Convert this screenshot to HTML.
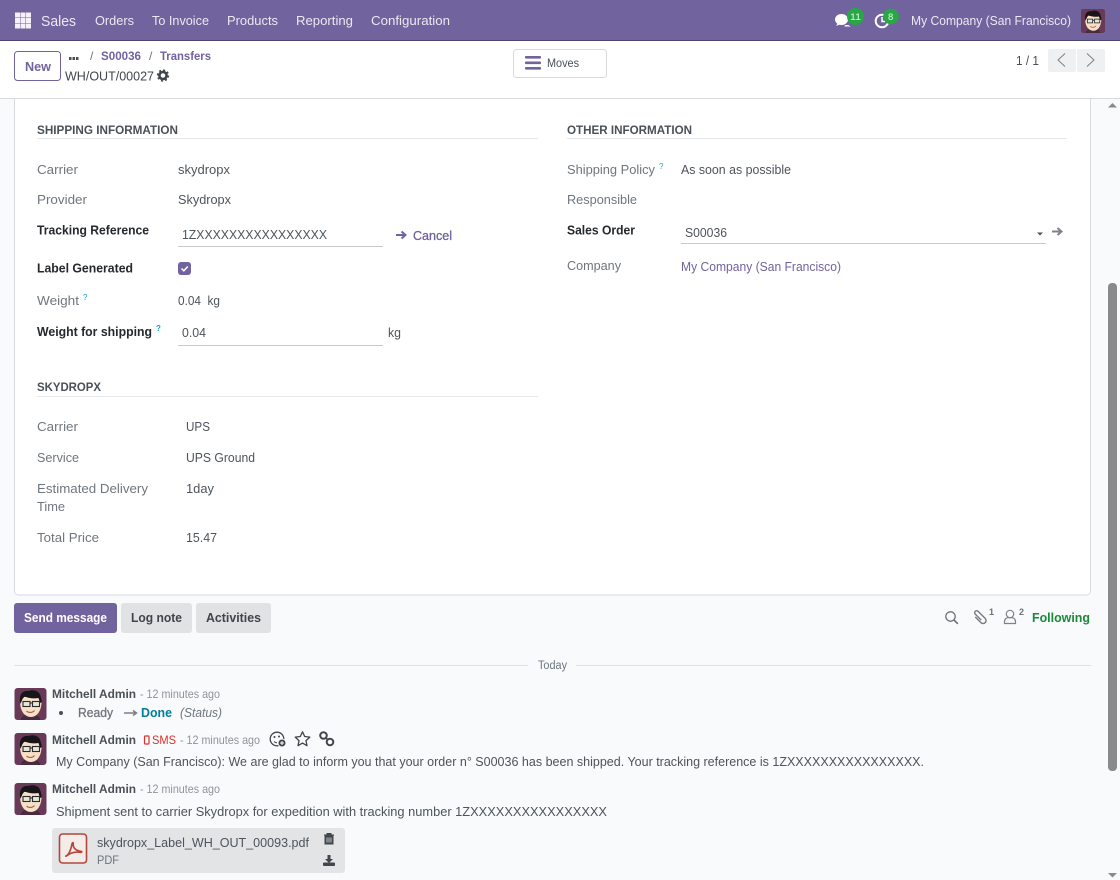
<!DOCTYPE html>
<html lang="en"><head><meta charset="utf-8"><title>WH/OUT/00027</title>
<style>
html,body{margin:0;padding:0;width:1120px;height:880px;overflow:hidden;background:#f9fafb}
svg{display:block}
text{font-family:"Liberation Sans",sans-serif;font-size:13px;fill:#4d545b}
.b{font-weight:700}
.l{fill:#6f767d}
.d{fill:#25292d;font-weight:700}
.h{font-weight:700;font-size:12px;fill:#495057}
.n{fill:#ebe8f2}
.p{fill:#71639e}
.g{fill:#8f949a;font-size:12px}
.q{fill:#17a2b8;font-size:8px}
</style></head><body>
<svg width="1120" height="880" viewBox="0 0 1120 880" xmlns="http://www.w3.org/2000/svg">
<defs>
<symbol id="av" viewBox="0 0 32 32">
<rect width="32" height="32" rx="3" fill="#693a58"/>
<path d="M6 32c1-4 4-6 10-6s9 2 10 6z" fill="#4a2a3e"/>
<path d="M5.500 13c0 10 4.500 16 11 16s10.500-7 10.500-15l-2-5H8z" fill="#f8e0c6"/>
<path d="M6 16C4 8 7 2 14 3c5-2 11 0 12 5l1.500 6-2 1-1.500-5c-5 1-10 0-14-1.500L8 11z" fill="#17151a"/>
<rect x="8.500" y="13.500" width="7" height="5" fill="#e3e5df" stroke="#2a2a2a" stroke-width="1.100"/>
<rect x="18" y="13.500" width="7" height="5" fill="#e3e5df" stroke="#2a2a2a" stroke-width="1.100"/>
<path d="M15.500 15h2.500" stroke="#2a2a2a" stroke-width="1.100"/>
<path d="M12 23c2 2 6 2 8-.5" stroke="#a0604a" stroke-width="1.100" fill="none"/>
</symbol>
<symbol id="arrow" viewBox="0 0 12 10"><path d="M1 5h9M6.500 1.500 10.500 5 6.500 8.500" fill="none" stroke="currentColor" stroke-width="2"/></symbol>
</defs>

<!-- Navbar -->
<rect width="1120" height="40" fill="#71639e"/>
<rect y="40" width="1120" height="1" fill="#4e4570"/>
<g fill="#f4f2f8">
<rect x="15" y="12.500" width="5" height="5"/><rect x="20.500" y="12.500" width="5" height="5"/><rect x="26" y="12.500" width="5" height="5"/>
<rect x="15" y="18" width="5" height="5"/><rect x="20.500" y="18" width="5" height="5"/><rect x="26" y="18" width="5" height="5"/>
<rect x="15" y="23.500" width="5" height="5"/><rect x="20.500" y="23.500" width="5" height="5"/><rect x="26" y="23.500" width="5" height="5"/>
</g>
<text x="41" y="26" class="n" style="font-size:15px" textLength="35" lengthAdjust="spacingAndGlyphs">Sales</text>
<text x="95" y="25" class="n" textLength="39" lengthAdjust="spacingAndGlyphs">Orders</text>
<text x="152" y="25" class="n" textLength="57" lengthAdjust="spacingAndGlyphs">To Invoice</text>
<text x="227" y="25" class="n" textLength="51" lengthAdjust="spacingAndGlyphs">Products</text>
<text x="296" y="25" class="n" textLength="57" lengthAdjust="spacingAndGlyphs">Reporting</text>
<text x="371" y="25" class="n" textLength="79" lengthAdjust="spacingAndGlyphs">Configuration</text>

<ellipse cx="841.500" cy="19.500" rx="6.500" ry="5.500" fill="#fff"/>
<path d="M838 23l-2 3 5-2zM845 25h3.500l2 2-2-.5h-4z" fill="#fff"/>
<circle cx="855.500" cy="16.500" r="8.500" fill="#28a745"/>
<text x="850" y="20" style="font-size:9.500px;fill:#e9f7ec;font-weight:400" textLength="11" lengthAdjust="spacingAndGlyphs">11</text>
<circle cx="882" cy="21" r="6.300" fill="none" stroke="#fff" stroke-width="2"/>
<path d="M882 17v4.500h3" fill="none" stroke="#fff" stroke-width="1.500"/>
<circle cx="891" cy="16.500" r="7.800" fill="#28a745"/>
<text x="888" y="20" style="font-size:9.500px;fill:#e9f7ec">8</text>
<text x="911" y="25" class="n" textLength="160" lengthAdjust="spacingAndGlyphs">My Company (San Francisco)</text>
<use href="#av" x="1081" y="9" width="24" height="24"/>

<!-- Control panel -->
<rect y="41" width="1120" height="57" fill="#fff"/>
<rect y="98" width="1120" height="1" fill="#d8dadd"/>
<rect x="14.500" y="51.500" width="46" height="29" rx="3" fill="#fff" stroke="#71639e"/>
<text x="25" y="71" class="p b" textLength="26" lengthAdjust="spacingAndGlyphs">New</text>
<g fill="#495057"><rect x="69" y="57" width="2.500" height="3"/><rect x="72.500" y="57" width="2.500" height="3"/><rect x="76" y="57" width="2.500" height="3"/></g>
<text x="90" y="60" style="font-size:12px;fill:#6c757d">/</text>
<text x="101" y="60" class="p b" style="font-size:12px" textLength="40" lengthAdjust="spacingAndGlyphs">S00036</text>
<text x="149" y="60" style="font-size:12px;fill:#6c757d">/</text>
<text x="160" y="60" class="p b" style="font-size:12px" textLength="51" lengthAdjust="spacingAndGlyphs">Transfers</text>
<text x="65" y="80.500" style="fill:#40464c" textLength="89" lengthAdjust="spacingAndGlyphs">WH/OUT/00027</text>
<circle cx="163" cy="75.500" r="3.600" fill="none" stroke="#40464c" stroke-width="2.600"/>
<circle cx="163" cy="75.500" r="5.400" fill="none" stroke="#40464c" stroke-width="1.500" stroke-dasharray="2 2.240"/>

<rect x="513.500" y="49.500" width="93" height="28" rx="3" fill="#fff" stroke="#d8dadd"/>
<g fill="#71639e"><rect x="525" y="56" width="16" height="2.600" rx="1"/><rect x="525" y="61.500" width="16" height="2.600" rx="1"/><rect x="525" y="67" width="16" height="2.600" rx="1"/></g>
<text x="547" y="67" style="font-size:11.500px;fill:#495057" textLength="32" lengthAdjust="spacingAndGlyphs">Moves</text>

<text x="1016" y="65" style="fill:#495057" textLength="23" lengthAdjust="spacingAndGlyphs">1 / 1</text>
<rect x="1048" y="49" width="28" height="23" rx="2" fill="#eff0f2"/>
<rect x="1077" y="49" width="28" height="23" rx="2" fill="#eff0f2"/>
<path d="M1065 53.500l-7 6.500 7 6.500M1087 53.500l7 6.500-7 6.500" fill="none" stroke="#7b8187" stroke-width="1"/>

<!-- Sheet -->
<path d="M14.500 99v492a4 4 0 0 0 4 4h1068a4 4 0 0 0 4-4V99" fill="#fff" stroke="#d8dadd"/>

<text x="37" y="134" class="h" textLength="141" lengthAdjust="spacingAndGlyphs">SHIPPING INFORMATION</text>
<rect x="37" y="138" width="501" height="1" fill="#e5e7ea"/>
<text x="567" y="134" class="h" textLength="125" lengthAdjust="spacingAndGlyphs">OTHER INFORMATION</text>
<rect x="567" y="138" width="500" height="1" fill="#e5e7ea"/>

<text x="37" y="174" class="l" textLength="41" lengthAdjust="spacingAndGlyphs">Carrier</text>
<text x="178" y="174" textLength="52" lengthAdjust="spacingAndGlyphs">skydropx</text>
<text x="37" y="204" class="l" textLength="50" lengthAdjust="spacingAndGlyphs">Provider</text>
<text x="178" y="204" textLength="53" lengthAdjust="spacingAndGlyphs">Skydropx</text>
<text x="37" y="234.500" class="d" textLength="112" lengthAdjust="spacingAndGlyphs">Tracking Reference</text>
<text x="182" y="239" textLength="145" lengthAdjust="spacingAndGlyphs">1ZXXXXXXXXXXXXXXXX</text>
<rect x="178" y="246" width="205" height="1" fill="#c6c9cd"/>
<use href="#arrow" x="395" y="230" width="12" height="10" color="#71639e"/>
<text x="413" y="240" class="p" style="stroke:#71639e;stroke-width:.3" textLength="39" lengthAdjust="spacingAndGlyphs">Cancel</text>
<text x="37" y="272.500" class="d" textLength="96" lengthAdjust="spacingAndGlyphs">Label Generated</text>
<rect x="178" y="262" width="13" height="13" rx="3" fill="#71639e"/>
<path d="M181.500 268.500l2.300 2.300 4-4.300" fill="none" stroke="#fff" stroke-width="1.500"/>
<text x="37" y="305" class="l" textLength="42" lengthAdjust="spacingAndGlyphs">Weight</text>
<text x="83" y="300" class="q">?</text>
<text x="178" y="305" textLength="42" lengthAdjust="spacingAndGlyphs">0.04&#160; kg</text>
<text x="37" y="336" class="d" textLength="115" lengthAdjust="spacingAndGlyphs">Weight for shipping</text>
<text x="156" y="331" class="q b">?</text>
<text x="182" y="337" textLength="24" lengthAdjust="spacingAndGlyphs">0.04</text>
<rect x="178" y="345" width="205" height="1" fill="#c6c9cd"/>
<text x="388" y="337" textLength="13" lengthAdjust="spacingAndGlyphs">kg</text>

<text x="37" y="391" class="h" textLength="64" lengthAdjust="spacingAndGlyphs">SKYDROPX</text>
<rect x="37" y="396" width="501" height="1" fill="#e5e7ea"/>
<text x="37" y="431" class="l" textLength="41" lengthAdjust="spacingAndGlyphs">Carrier</text>
<text x="186" y="431" textLength="24" lengthAdjust="spacingAndGlyphs">UPS</text>
<text x="37" y="462" class="l" textLength="42" lengthAdjust="spacingAndGlyphs">Service</text>
<text x="186" y="462" textLength="69" lengthAdjust="spacingAndGlyphs">UPS Ground</text>
<text x="37" y="493" class="l" textLength="111" lengthAdjust="spacingAndGlyphs">Estimated Delivery</text>
<text x="37" y="511" class="l" textLength="28" lengthAdjust="spacingAndGlyphs">Time</text>
<text x="186" y="493" textLength="28" lengthAdjust="spacingAndGlyphs">1day</text>
<text x="37" y="542" class="l" textLength="62" lengthAdjust="spacingAndGlyphs">Total Price</text>
<text x="186" y="542" textLength="31" lengthAdjust="spacingAndGlyphs">15.47</text>

<text x="567" y="174" class="l" textLength="88" lengthAdjust="spacingAndGlyphs">Shipping Policy</text>
<text x="659" y="169" class="q">?</text>
<text x="681" y="174" textLength="110" lengthAdjust="spacingAndGlyphs">As soon as possible</text>
<text x="567" y="204" class="l" textLength="70" lengthAdjust="spacingAndGlyphs">Responsible</text>
<text x="567" y="234.500" class="d" textLength="68" lengthAdjust="spacingAndGlyphs">Sales Order</text>
<text x="685" y="237" textLength="42" lengthAdjust="spacingAndGlyphs">S00036</text>
<rect x="681" y="243" width="365" height="1" fill="#c6c9cd"/>
<path d="M1037 232.500h6l-3 3z" fill="#495057"/>
<use href="#arrow" x="1051" y="226.500" width="12" height="10" color="#7c8287"/>
<text x="567" y="270" class="l" textLength="54" lengthAdjust="spacingAndGlyphs">Company</text>
<text x="681" y="271" class="p" textLength="160" lengthAdjust="spacingAndGlyphs">My Company (San Francisco)</text>

<!-- Chatter buttons -->
<rect x="14" y="603" width="103" height="30" rx="3" fill="#71639e"/>
<text x="24" y="622" class="b" style="fill:#fff" textLength="83" lengthAdjust="spacingAndGlyphs">Send message</text>
<rect x="121" y="603" width="71" height="30" rx="3" fill="#e0e2e4"/>
<text x="131" y="622" class="b" style="fill:#3f454b" textLength="51" lengthAdjust="spacingAndGlyphs">Log note</text>
<rect x="196" y="603" width="75" height="30" rx="3" fill="#e0e2e4"/>
<text x="206" y="622" class="b" style="fill:#3f454b" textLength="55" lengthAdjust="spacingAndGlyphs">Activities</text>

<circle cx="950.500" cy="616.500" r="4.700" fill="none" stroke="#6c7278" stroke-width="1.300"/>
<path d="M954 620l3.800 3.800" stroke="#6c7278" stroke-width="1.600"/>
<path d="M-3 -3V5a3 3 0 0 0 6 0V-5a2 2 0 0 0-4 0V3.500" fill="none" stroke="#757b81" stroke-width="1.400" transform="translate(979.500 617) rotate(-45)"/>
<text x="989" y="615" style="font-size:9px;fill:#6c7278;font-weight:700">1</text>
<circle cx="1010" cy="614" r="3.700" fill="none" stroke="#7c8288" stroke-width="1.200"/>
<path d="M1004.500 623.500v-1.500c0-3 2-4 3-4.300h5c1 .3 3 1.300 3 4.300v1.500z" fill="none" stroke="#7c8288" stroke-width="1.200"/>
<text x="1019" y="615" style="font-size:9px;fill:#6c7278;font-weight:700">2</text>
<text x="1032" y="622" class="b" style="fill:#1a8a3a" textLength="58" lengthAdjust="spacingAndGlyphs">Following</text>

<!-- Separator -->
<rect x="14" y="665" width="514" height="1" fill="#e0e2e5"/>
<rect x="576" y="665" width="515" height="1" fill="#e0e2e5"/>
<text x="538" y="669" style="font-size:11.500px;fill:#6c757d" textLength="29" lengthAdjust="spacingAndGlyphs">Today</text>

<!-- Message 1 -->
<use href="#av" x="14" y="688" width="33" height="32"/>
<text x="52" y="698" class="b" style="font-size:12px;fill:#495057" textLength="84" lengthAdjust="spacingAndGlyphs">Mitchell Admin</text>
<text x="140" y="698" class="g" textLength="80" lengthAdjust="spacingAndGlyphs">- 12 minutes ago</text>
<circle cx="61" cy="713" r="2" fill="#495057"/>
<text x="78" y="717" style="fill:#6f757c;stroke:#6f757c;stroke-width:.3" textLength="35" lengthAdjust="spacingAndGlyphs">Ready</text>
<path d="M124 713h12M133 710.500l3.500 2.500-3.500 2.500" fill="none" stroke="#7a8086" stroke-width="1.500"/>
<text x="141" y="717" class="b" style="fill:#017e9c" textLength="31" lengthAdjust="spacingAndGlyphs">Done</text>
<text x="180" y="717" style="font-style:italic;fill:#6c757d" textLength="42" lengthAdjust="spacingAndGlyphs">(Status)</text>

<!-- Message 2 -->
<use href="#av" x="14" y="733" width="33" height="32"/>
<text x="52" y="744" class="b" style="font-size:12px;fill:#495057" textLength="84" lengthAdjust="spacingAndGlyphs">Mitchell Admin</text>
<rect x="144.500" y="736" width="4.500" height="8" rx=".6" fill="none" stroke="#d9332f" stroke-width="1.200"/>
<text x="152" y="744" style="font-size:12px;fill:#d9332f" textLength="24" lengthAdjust="spacingAndGlyphs">SMS</text>
<text x="180" y="744" class="g" textLength="80" lengthAdjust="spacingAndGlyphs">- 12 minutes ago</text>
<circle cx="277" cy="739" r="6.800" fill="none" stroke="#40464c" stroke-width="1.300"/>
<circle cx="274.500" cy="737" r="1" fill="#40464c"/><circle cx="279" cy="736.500" r="1" fill="#40464c"/><path d="M274 741.500c1 1 2 1.300 3 1.300" stroke="#40464c" fill="none"/>
<circle cx="282" cy="743" r="4" fill="#40464c" stroke="#f9fafb"/>
<path d="M280 743h4M282 741v4" stroke="#fff"/>
<path d="M302.500 731.800l2.200 4.700 5.100.6-3.800 3.500 1 5.100-4.500-2.600-4.500 2.600 1-5.100-3.800-3.500 5.100-.6z" fill="none" stroke="#40464c" stroke-width="1.300" stroke-linejoin="round"/>
<circle cx="323.500" cy="735.500" r="3.300" fill="none" stroke="#40464c" stroke-width="2"/>
<circle cx="330" cy="742" r="3.300" fill="none" stroke="#40464c" stroke-width="2"/>
<path d="M325.500 737.500l2.500 2.500" stroke="#40464c" stroke-width="1.600"/>
<text x="56" y="766" textLength="868" lengthAdjust="spacingAndGlyphs">My Company (San Francisco): We are glad to inform you that your order n° S00036 has been shipped. Your tracking reference is 1ZXXXXXXXXXXXXXXXX.</text>

<!-- Message 3 -->
<use href="#av" x="14" y="783" width="33" height="32"/>
<text x="52" y="793" class="b" style="font-size:12px;fill:#495057" textLength="84" lengthAdjust="spacingAndGlyphs">Mitchell Admin</text>
<text x="140" y="793" class="g" textLength="80" lengthAdjust="spacingAndGlyphs">- 12 minutes ago</text>
<text x="56" y="816" textLength="551" lengthAdjust="spacingAndGlyphs">Shipment sent to carrier Skydropx for expedition with tracking number 1ZXXXXXXXXXXXXXXXX</text>

<rect x="52" y="828" width="293" height="45" rx="3" fill="#e2e4e6"/>
<rect x="59.500" y="834" width="27" height="29" rx="3" fill="#f3ece9" stroke="#b5473a" stroke-width="1.600"/>
<path d="M66 856c3-1.500 5-7 6-12 .4-2 1.500-1.500 1.200 0-.3 4 3 7 7.800 7.300 1.300 0 .8 1.300-.8 1-4-.7-9 .2-12.200 2.500-1.500 1.200-2.700 1.700-2 1.200z" fill="none" stroke="#b5473a" stroke-width="1.700" stroke-linejoin="round"/>
<text x="97" y="847" textLength="212" lengthAdjust="spacingAndGlyphs">skydropx_Label_WH_OUT_00093.pdf</text>
<text x="97" y="864" style="font-size:11.500px;fill:#6c757d" textLength="22" lengthAdjust="spacingAndGlyphs">PDF</text>
<path d="M325 836h8v8h-8zM324 835h10M327 835v-1.500h4V835" fill="#40464c" stroke="#40464c"/>
<path d="M327 837.500v5M329 837.500v5M331 837.500v5" stroke="#e2e4e6" stroke-width=".8"/>
<path d="M327.500 855h3v4h2.500l-4 4-4-4h2.500z" fill="#40464c"/>
<rect x="323" y="862.500" width="12" height="3.500" rx="1" fill="#40464c"/>

<!-- Scrollbar -->
<rect x="1108" y="283" width="9" height="488" rx="4" fill="#8a8a8a"/>
<path d="M1108 107.500l4.500-4.500 4.500 4.500z" fill="#8a8a8a"/>
<path d="M1108 873l4.500 4.500 4.500-4.500z" fill="#8a8a8a"/>
</svg>
</body></html>
